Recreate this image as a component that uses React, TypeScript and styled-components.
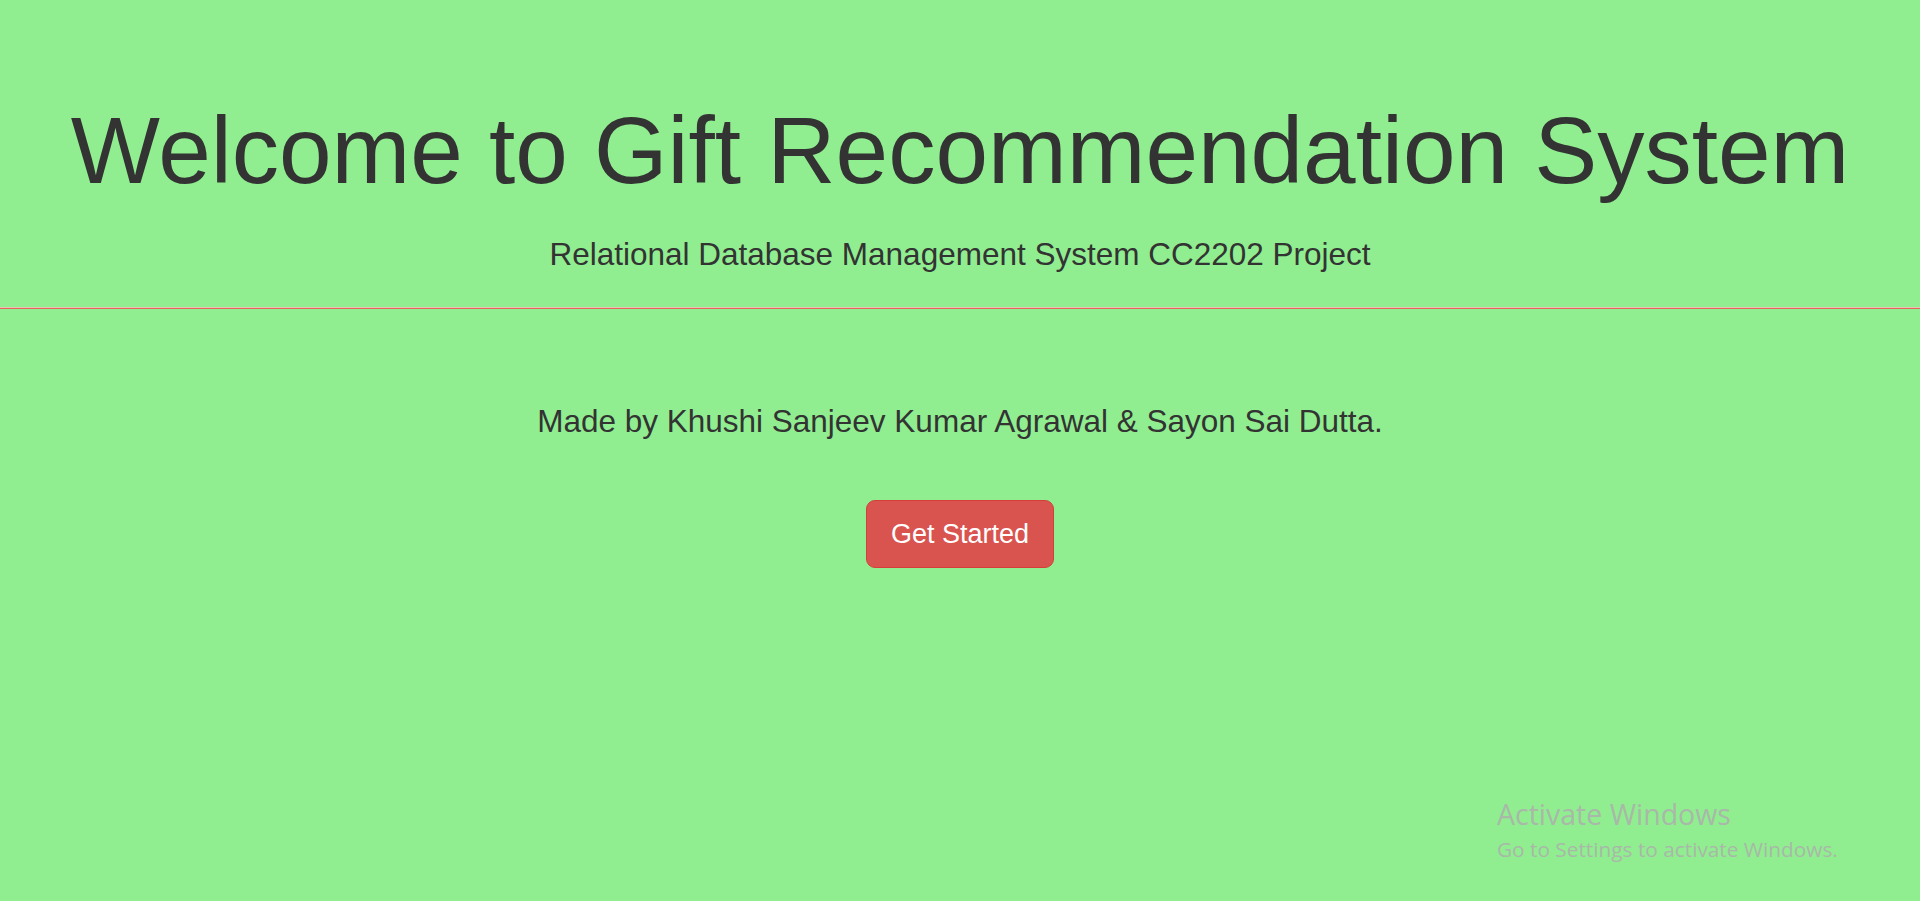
import React from "react";
import styled, { createGlobalStyle } from "styled-components";

const Global = createGlobalStyle`
  html, body {
    margin: 0;
    padding: 0;
    background: #90ee90;
  }
  body {
    font-family: "Liberation Sans", Arial, Helvetica, sans-serif;
    color: #333333;
    min-height: 901px;
  }
  * { box-sizing: border-box; }
`;

const Page = styled.div`
  min-height: 901px;
  background: #90ee90;
  position: relative;
  overflow: hidden;
`;

const Header = styled.header`
  display: flex;
  flex-direction: column;
  align-items: center;
  padding-top: 98px;
  padding-bottom: 31px;
  border-bottom: 1px solid #e5635b;
  box-shadow: 0 -1px 0 #e8c4b4 inset;
`;

const Title = styled.h1`
  margin: 0;
  font-size: 94.5px;
  line-height: 104px;
  font-weight: 400;
  color: #333333;
  text-align: center;
  white-space: nowrap;
`;

const Subtitle = styled.p`
  margin: 30px 0 0;
  font-size: 31.5px;
  line-height: 45px;
  color: #333333;
  text-align: center;
`;

const Main = styled.main`
  display: flex;
  flex-direction: column;
  align-items: center;
  padding-top: 90px;
`;

const Credits = styled.p`
  margin: 0;
  font-size: 31.5px;
  line-height: 45px;
  color: #333333;
  text-align: center;
`;

const Button = styled.button`
  margin-top: 56px;
  font-family: "Liberation Sans", Arial, Helvetica, sans-serif;
  font-size: 27px;
  line-height: 36px;
  padding: 15px 24px;
  height: 68px;
  color: #ffffff;
  background: #d9534f;
  border: 1.5px solid #d43f3a;
  border-radius: 9px;
  cursor: pointer;
`;

const Watermark = styled.div`
  position: absolute;
  left: 1497px;
  top: 796px;
  display: flex;
  flex-direction: column;
  font-family: "Open Sans", "Noto Sans", sans-serif;
  color: #a9b8a8;
  pointer-events: none;
`;

const WmTitle = styled.div`
  font-size: 28.5px;
  line-height: 36px;
`;

const WmSub = styled.div`
  font-size: 20.8px;
  line-height: 28px;
  margin-top: 3px;
`;

export default function App() {
  return (
    <Page>
      <Global />
      <Header>
        <Title>Welcome to Gift Recommendation System</Title>
        <Subtitle>Relational Database Management System CC2202 Project</Subtitle>
      </Header>
      <Main>
        <Credits>Made by Khushi Sanjeev Kumar Agrawal &amp; Sayon Sai Dutta.</Credits>
        <Button>Get Started</Button>
      </Main>
      <Watermark>
        <WmTitle>Activate Windows</WmTitle>
        <WmSub>Go to Settings to activate Windows.</WmSub>
      </Watermark>
    </Page>
  );
}
